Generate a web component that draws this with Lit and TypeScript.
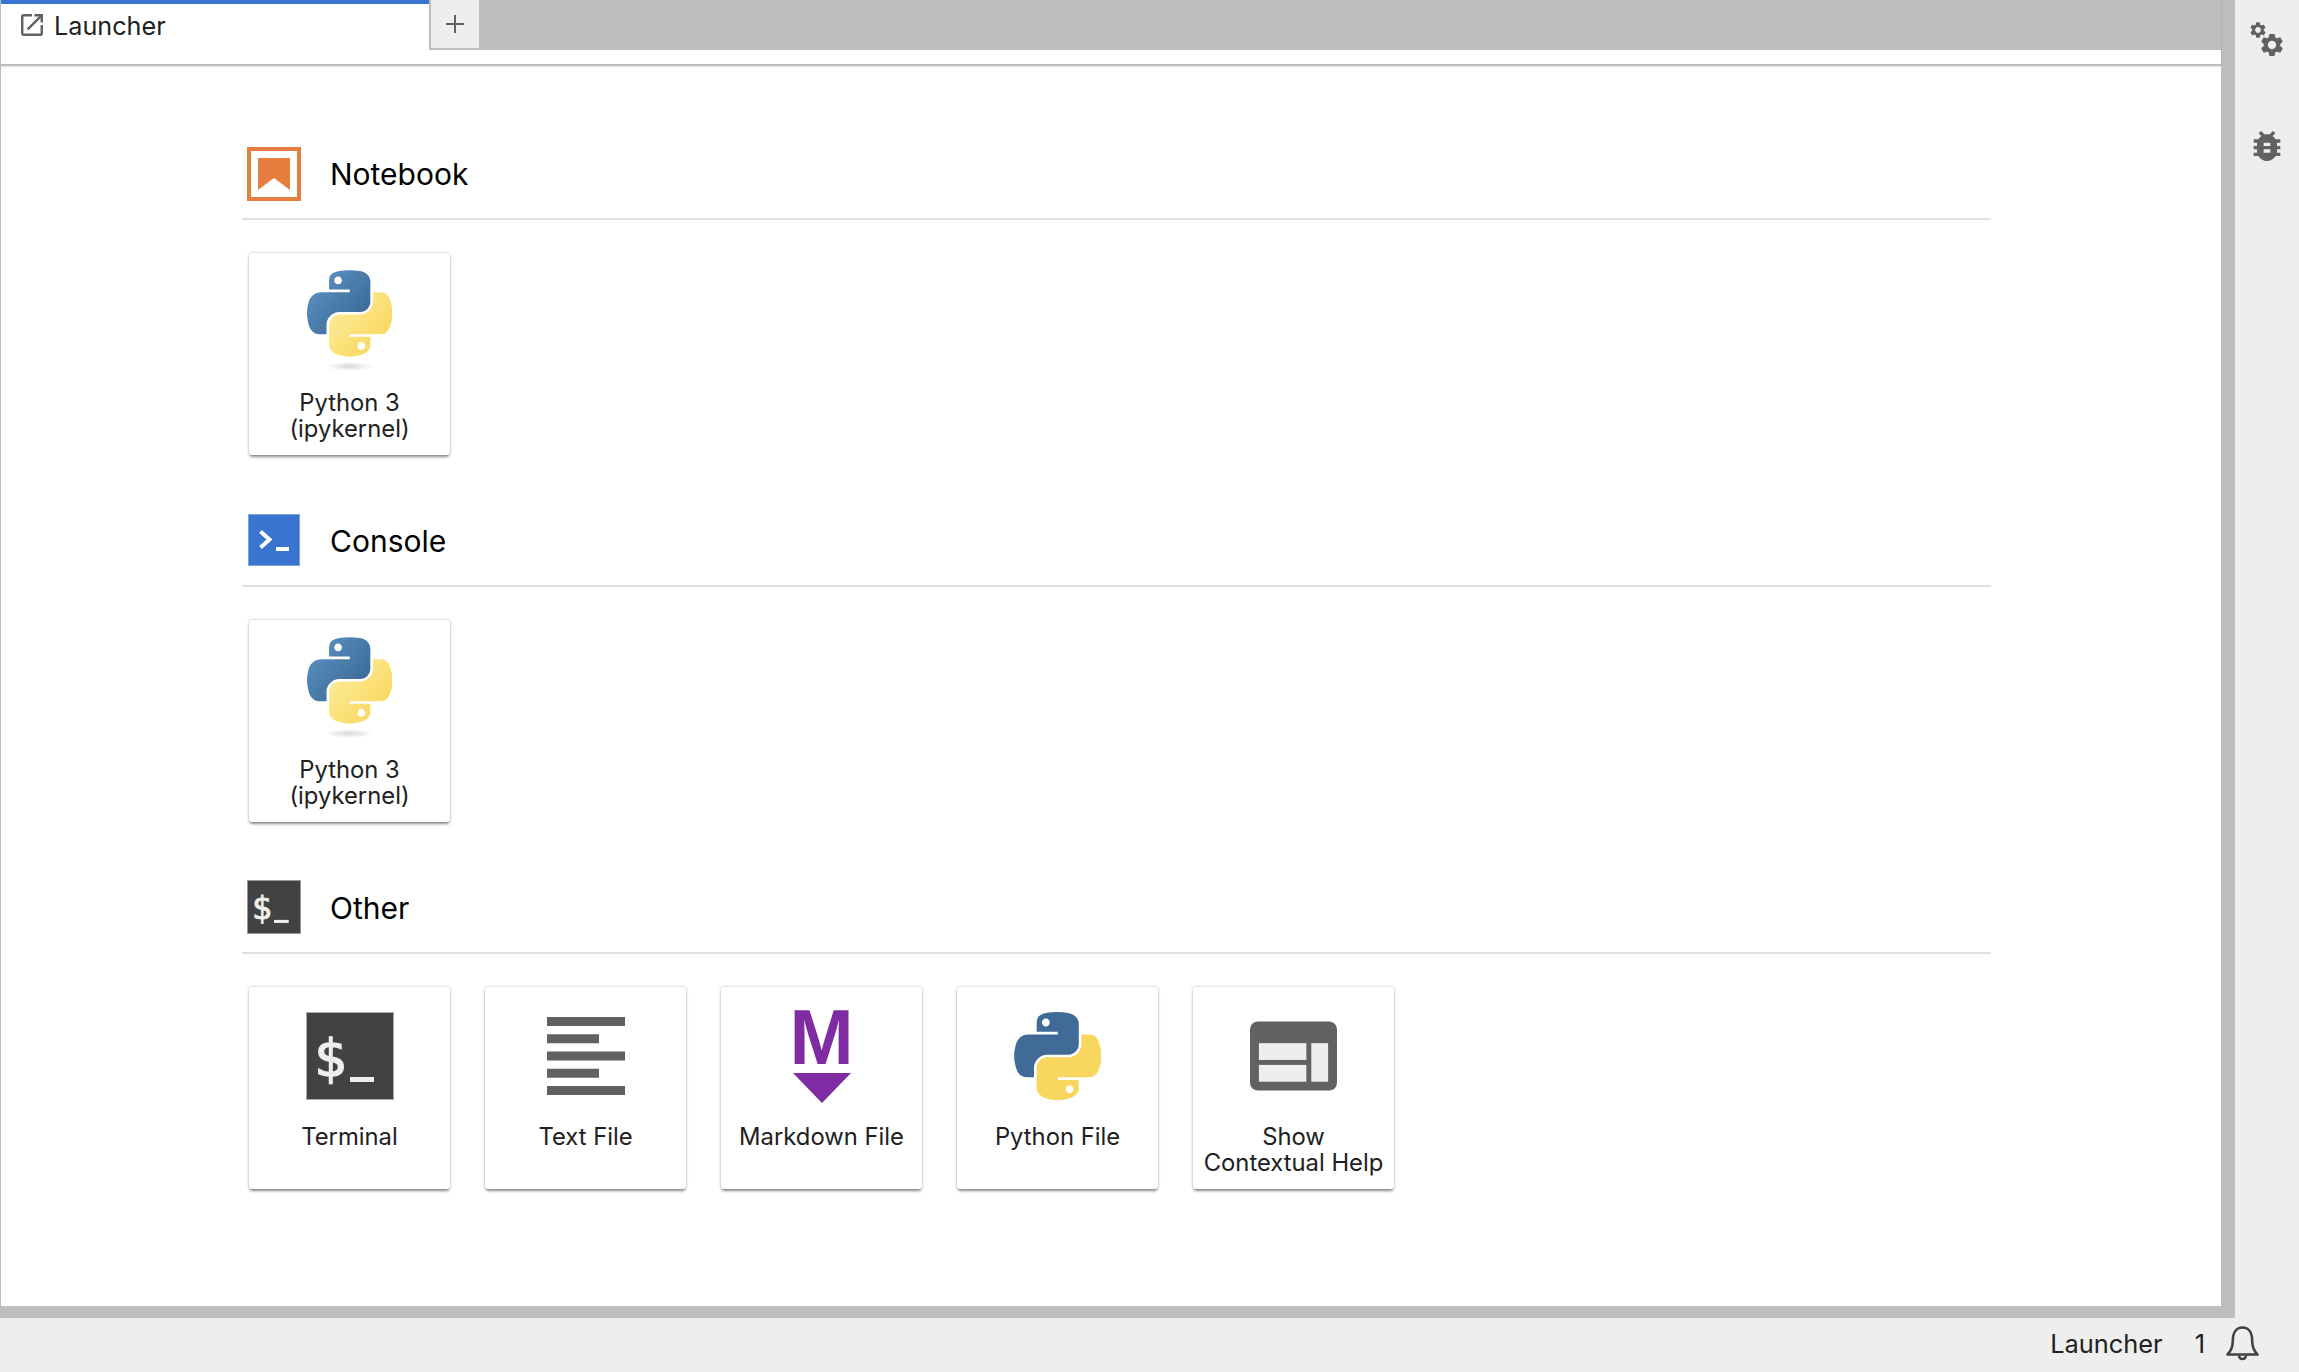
import { LitElement, html, css, svg } from "lit";
import { customElement } from "lit/decorators.js";

const BLUE_SNAKE = "M54.9 0C50.3 0 46 .4 42.1 1.1 30.8 3.1 28.7 7.3 28.7 15v10.2h26.8v3.4H18.6c-7.8 0-14.6 4.7-16.7 13.6-2.5 10.2-2.6 16.6 0 27.3 1.9 7.9 6.5 13.6 14.2 13.6h9.2V71c0-8.8 7.7-16.7 16.8-16.7h26.8c7.5 0 13.4-6.1 13.4-13.6V15.1c0-7.3-6.1-12.7-13.4-13.9C64.3.3 59.5 0 54.9 0zm-14.5 8.2c2.8 0 5 2.3 5 5.1s-2.3 5.1-5 5.1c-2.8 0-5-2.3-5-5.1s2.3-5.1 5-5.1z";
const YELLOW_SNAKE = "M85.6 28.7v11.9c0 9.2-7.8 17-16.8 17H42.1c-7.3 0-13.4 6.3-13.4 13.6v25.5c0 7.3 6.3 11.5 13.4 13.6 8.5 2.5 16.6 2.9 26.8 0 6.8-2 13.4-5.9 13.4-13.6V86.5H55.5v-3.4h40.2c7.8 0 10.7-5.4 13.4-13.6 2.8-8.4 2.7-16.5 0-27.3-1.9-7.8-5.6-13.6-13.4-13.6zM70.6 93.3c2.8 0 5 2.3 5 5.1s-2.3 5.1-5 5.1c-2.8 0-5-2.3-5-5.1s2.3-5.1 5-5.1z";

const kernelIcon = html`<svg class="kernel" viewBox="0 0 110.4 132" width="85" height="102">
  <defs>
    <linearGradient id="pb" x1="0" y1="0" x2="1" y2="0.9">
      <stop offset="0" stop-color="#5f96c8"></stop><stop offset="1" stop-color="#37648f"></stop>
    </linearGradient>
    <linearGradient id="py" x1="0.9" y1="0.85" x2="0.1" y2="0.15">
      <stop offset="0" stop-color="#f9d65a"></stop><stop offset="1" stop-color="#feec9b"></stop>
    </linearGradient>
    <radialGradient id="ps">
      <stop offset="0" stop-color="#b8b8b8" stop-opacity=".55"></stop><stop offset="1" stop-color="#b8b8b8" stop-opacity="0"></stop>
    </radialGradient>
  </defs>
  <path d=${BLUE_SNAKE} fill="url(#pb)"></path>
  <path d=${YELLOW_SNAKE} fill="url(#py)"></path>
  <ellipse cx="55" cy="125" rx="31" ry="6" fill="url(#ps)"></ellipse>
</svg>`;

const pyFileIcon = html`<svg viewBox="0 0 110.4 112" width="87" height="88">
  <path d=${BLUE_SNAKE} fill="#3f6b96"></path>
  <path d=${YELLOW_SNAKE} fill="#f9d75f"></path>
</svg>`;

const terminalGlyph = (cls: string) => html`<svg class=${cls} viewBox="0 0 88 88">
  <rect x=".5" y=".5" width="87" height="87" fill="#424242" stroke="#aaa" stroke-width="1"></rect>
  <text x="8.5" y="63.5" class="dollar">$</text>
  <rect x="44" y="65" width="24" height="5" fill="#eee"></rect>
</svg>`;

const notebookSmall = html`<svg class="small" viewBox="0 0 54 54">
  <rect x="2" y="2" width="50" height="50" fill="#fff" stroke="#e57e3e" stroke-width="4"></rect>
  <path d="M11 11h32v32L27 31 11 43z" fill="#e57e3e"></path>
</svg>`;

const consoleSmall = html`<svg class="small" viewBox="0 0 54 54">
  <rect x="1.5" y="1.5" width="51" height="51" fill="#3874d0" stroke="#7ba3e2" stroke-width="1"></rect>
  <path d="M13.5 18.5l9 8-9 8" fill="none" stroke="#fff" stroke-width="4"></path>
  <rect x="29" y="34" width="13" height="4" fill="#fff"></rect>
</svg>`;

const textIcon = html`<svg viewBox="0 0 88 88" width="88" height="88" fill="#616161">
  ${[0, 1, 2, 3, 4].map((i) =>
    svg`<rect x="5" y=${5 + i * 17.25} width=${i % 2 ? 52 : 78} height="9"></rect>`
  )}
</svg>`;

const markdownIcon = html`<div class="md">
  <span class="md-m">M</span>
  <svg viewBox="0 0 58 30" width="58" height="30"><path d="M0 0h58L29 30z" fill="#7f2ba3"></path></svg>
</div>`;

const helpIcon = html`<svg viewBox="0 0 88 70" width="87" height="70">
  <rect width="88" height="70" rx="8" fill="#616161"></rect>
  <g fill="#eee">
    <rect x="9" y="22" width="48" height="17"></rect>
    <rect x="9" y="44" width="48" height="17"></rect>
    <rect x="62" y="22" width="17" height="39"></rect>
  </g>
</svg>`;

const GEAR = "M19.14 12.94c.04-.3.06-.61.06-.94 0-.32-.02-.64-.07-.94l2.03-1.58c.18-.14.23-.41.12-.61l-1.92-3.32c-.12-.22-.37-.29-.59-.22l-2.39.96c-.5-.38-1.03-.7-1.62-.94L14.4 2.81c-.04-.24-.24-.41-.48-.41h-3.84c-.24 0-.43.17-.47.41L9.25 5.35c-.59.24-1.13.57-1.62.94L5.24 5.33c-.22-.08-.47 0-.59.22L2.74 8.87c-.12.21-.08.47.12.61l2.03 1.58c-.05.3-.09.63-.09.94s.02.64.07.94l-2.03 1.58c-.18.14-.23.41-.12.61l1.92 3.32c.12.22.37.29.59.22l2.39-.96c.5.38 1.03.7 1.62.94l.36 2.54c.05.24.24.41.48.41h3.84c.24 0 .44-.17.47-.41l.36-2.54c.59-.24 1.13-.56 1.62-.94l2.39.96c.22.08.47 0 .59-.22l1.92-3.32c.12-.22.07-.47-.12-.61l-2.01-1.58zM12 15.6c-1.98 0-3.6-1.62-3.6-3.6s1.62-3.6 3.6-3.6 3.6 1.62 3.6 3.6-1.62 3.6-3.6 3.6z";
const BUG = "M20 8h-2.81c-.45-.78-1.07-1.45-1.82-1.96L17 4.41 15.59 3l-2.17 2.17C12.96 5.06 12.49 5 12 5c-.49 0-.96.06-1.41.17L8.41 3 7 4.41l1.62 1.63C7.88 6.55 7.26 7.22 6.81 8H4v2h2.09c-.05.33-.09.66-.09 1v1H4v2h2v1c0 .34.04.67.09 1H4v2h2.81c1.04 1.79 2.97 3 5.19 3s4.15-1.21 5.19-3H20v-2h-2.09c.05-.33.09-.66.09-1v-1h2v-2h-2v-1c0-.34-.04-.67-.09-1H20V8zm-6 8h-4v-2h4v2zm0-4h-4v-2h4v2z";

const gearsIcon = html`<svg class="gears" viewBox="0 0 44 44" width="44" height="44" fill="#616161">
  <path d=${GEAR} transform="translate(2.4 1.4) scale(.8)"></path>
  <path d=${GEAR} transform="translate(12.2 12.2) scale(1.15)"></path>
</svg>`;

interface Item { label: string; icon: unknown }
interface Section { title: string; icon: unknown; items: Item[] }

const KERNEL = "Python 3 (ipykernel)";
const SECTIONS: Section[] = [
  { title: "Notebook", icon: notebookSmall, items: [{ label: KERNEL, icon: kernelIcon }] },
  { title: "Console", icon: consoleSmall, items: [{ label: KERNEL, icon: kernelIcon }] },
  {
    title: "Other",
    icon: terminalGlyph("small"),
    items: [
      { label: "Terminal", icon: terminalGlyph("large") },
      { label: "Text File", icon: textIcon },
      { label: "Markdown File", icon: markdownIcon },
      { label: "Python File", icon: pyFileIcon },
      { label: "Show Contextual Help", icon: helpIcon },
    ],
  },
];

@customElement("app-root")
export class AppRoot extends LitElement {
  static styles = css`
    :host {
      display: flex;
      flex-direction: column;
      height: 100vh;
      overflow: hidden;
      font-family: Inter, "Liberation Sans", sans-serif;
      color: #212121;
      background: #eee;
    }
    .main-row { flex: 1; min-height: 0; display: flex; }
    .workspace {
      flex: 1; min-width: 0;
      display: flex; flex-direction: column;
      background: #bdbdbd;
      padding: 0 14px 12px 0;
    }
    .panel {
      flex: 1; min-height: 0;
      display: flex; flex-direction: column;
      background: #fff;
      border-left: 1px solid #bdbdbd;
    }
    .tabbar {
      display: flex; align-items: flex-start;
      height: 64px;
      border-bottom: 2px solid #bdbdbd;
      box-sizing: content-box;
      box-shadow: 0 1px 2px rgba(0,0,0,.12);
      margin-left: -1px;
      padding-left: 1px;
    }
    .tab {
      width: 428px; height: 64px;
      box-sizing: border-box;
      border-top: 4px solid #3874d0;
      display: flex; align-items: flex-start;
      padding: 8px 0 0 20px;
      gap: 11px;
      font-size: 25.2px;
      line-height: 28px;
    }
    .tab svg { flex: none; margin-top: 2px; }
    .add {
      width: 50px; height: 50px;
      box-sizing: border-box;
      background: #eee;
      border-left: 2px solid #bdbdbd;
      border-bottom: 2px solid #bdbdbd;
      display: flex; align-items: center; justify-content: center;
    }
    .tab-fill { flex: 1; height: 50px; background: #bdbdbd; }
    .launcher {
      flex: 1;
      padding: 81px 0 0 241px;
    }
    .section { width: 1749px; margin-bottom: 59px; }
    .section-head {
      display: flex; align-items: center;
      height: 54px;
      padding: 0 0 17px 5px;
      border-bottom: 2px solid #e0e0e0;
      gap: 29px;
      font-size: 30px;
      color: #000;
    }
    .section-head .title { line-height: 54px; }
    .section + .section svg.small { margin-top: -2px; }
    svg.small { width: 54px; height: 54px; display: block; }
    svg.large { width: 88px; height: 88px; display: block; }
    svg .dollar {
      font-family: "DejaVu Sans", sans-serif;
      font-size: 52px;
      fill: #eee;
      stroke: #eee;
      stroke-width: 1.4px;
    }
    .cards {
      display: flex; gap: 35px;
      padding: 33px 0 0 7px;
    }
    .card {
      width: 201px; height: 202px;
      box-sizing: border-box;
      background: #fff;
      border-radius: 3px;
      box-shadow: 0 0 3px rgba(0,0,0,.28), 0 3px 3px -1px rgba(0,0,0,.42);
      display: flex; flex-direction: column; align-items: center;
    }
    .card-icon {
      height: 137px; flex: none;
      display: flex; align-items: center; justify-content: center;
    }
    .card-icon svg { display: block; }
    .card-icon svg.kernel { margin-bottom: 1px; }
    .label {
      font-size: 23.8px;
      line-height: 25.5px;
      text-align: center;
      padding: 0 8px;
      color: #212121;
    }
    .md { display: flex; flex-direction: column; align-items: center; }
    .md-m {
      font-family: "Liberation Sans", sans-serif;
      font-weight: 700;
      font-size: 77px;
      line-height: 56px;
      height: 64px;
      color: #7f2ba3;
    }
    .rail {
      width: 64px; flex: none;
      background: #eee;
      display: flex; flex-direction: column; align-items: center;
    }
    .rail .gears { margin-top: 19px; margin-left: 2px; }
    .rail .bug { margin-top: 63px; display: block; }
    .status {
      height: 54px; flex: none;
      box-sizing: border-box;
      background: #eee;
      display: flex; align-items: center; justify-content: flex-end;
      padding: 0 40px 3px 0;
      font-size: 25.4px;
    }
    .status .count { margin-left: 32px; }
    .status svg { margin-left: 21px; display: block; }
  `;

  render() {
    return html`
      <div class="main-row">
        <div class="workspace">
          <div class="panel">
            <div class="tabbar">
              <div class="tab">
                <svg viewBox="3 3 18 18" width="22" height="22" fill="#616161"><path d="M19 19H5V5h7V3H5a2 2 0 0 0-2 2v14a2 2 0 0 0 2 2h14c1.1 0 2-.9 2-2v-7h-2v7zM14 3v2h3.59l-9.83 9.83 1.41 1.41L19 6.41V10h2V3h-7z"></path></svg>
                <span>Launcher</span>
              </div>
              <div class="add">
                <svg viewBox="0 0 18 18" width="18" height="18" fill="#616161"><rect x="8" width="2" height="18"></rect><rect y="8" width="18" height="2"></rect></svg>
              </div>
              <div class="tab-fill"></div>
            </div>
            <div class="launcher">
              ${SECTIONS.map(
                (s) => html`<div class="section">
                  <div class="section-head">${s.icon}<span class="title">${s.title}</span></div>
                  <div class="cards">
                    ${s.items.map(
                      (it) => html`<div class="card">
                        <div class="card-icon">${it.icon}</div>
                        <div class="label">${it.label}</div>
                      </div>`
                    )}
                  </div>
                </div>`
              )}
            </div>
          </div>
        </div>
        <div class="rail">
          ${gearsIcon}
          <svg class="bug" viewBox="0 0 24 24" width="40" height="40" fill="#616161"><path d=${BUG}></path></svg>
        </div>
      </div>
      <div class="status">
        <span>Launcher</span>
        <span class="count">1</span>
        <svg viewBox="0 0 33 35" width="33" height="35" fill="none" stroke="#424242" stroke-width="2.6">
          <path d="M1.5 28.5C5 25 6.8 22 6.8 15 6.8 6.5 10.5 1.5 16.5 1.5S26.2 6.5 26.2 15c0 7 1.8 10 5.3 13.5z" stroke-linejoin="round"></path>
          <path d="M13 29.5a3.5 3.5 0 0 0 7 0"></path>
        </svg>
      </div>
    `;
  }
}
